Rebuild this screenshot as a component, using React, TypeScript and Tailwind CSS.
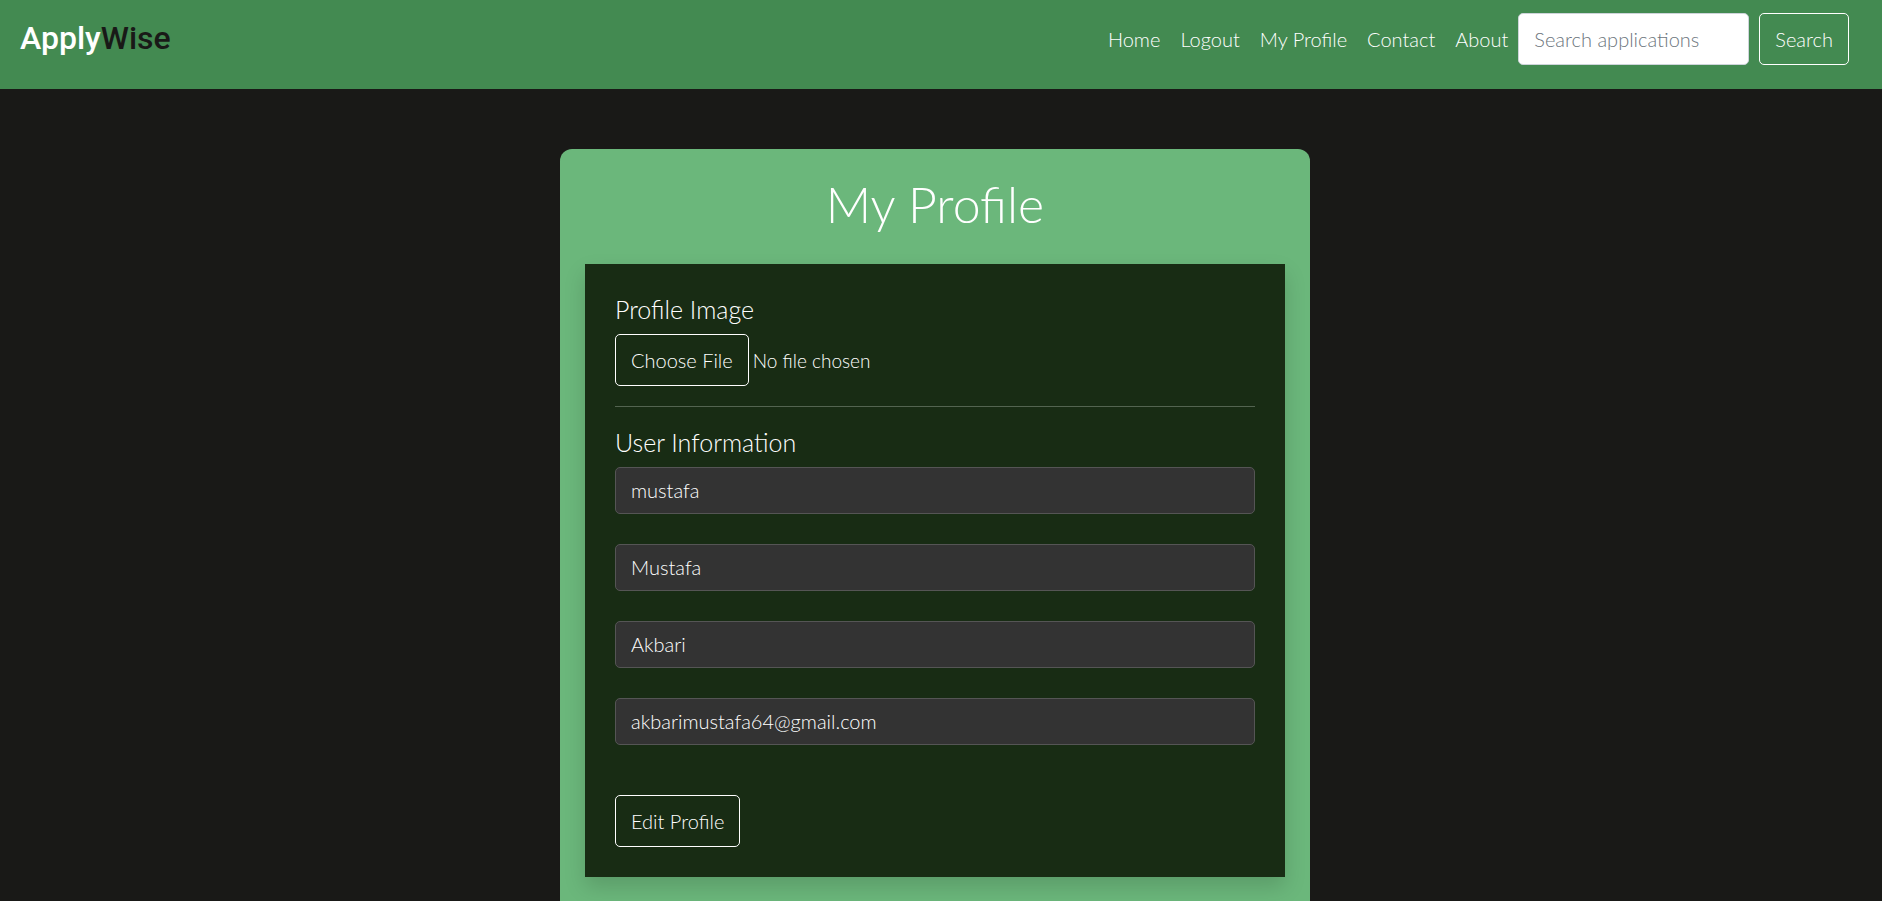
import React from "react";

const navLinks = ["Home", "Logout", "My Profile", "Contact", "About"];

const userFields = [
  { id: "username", label: "Username", type: "text", value: "mustafa" },
  { id: "first-name", label: "First name", type: "text", value: "Mustafa" },
  { id: "last-name", label: "Last name", type: "text", value: "Akbari" },
  { id: "email", label: "Email", type: "email", value: "akbarimustafa64@gmail.com" },
];

function Header() {
  return (
    <header className="flex items-start justify-between bg-[#438a51] pt-[13px] pr-[33px] pb-6 pl-5">
      <a
        href="#"
        className="font-[Roboto,sans-serif] text-[32px] leading-[50px] font-medium text-white"
      >
        Apply<span className="text-[#191917]">Wise</span>
      </a>
      <div className="flex items-center">
        <nav className="flex">
          {navLinks.map((link) => (
            <a key={link} href="#" className="px-[10px] leading-[30px]">
              {link}
            </a>
          ))}
        </nav>
        <form className="flex gap-[10px]" onSubmit={(e) => e.preventDefault()}>
          <input
            type="search"
            aria-label="Search applications"
            placeholder="Search applications"
            className="h-[52px] w-[231px] rounded-[5px] border border-[#ced4da] bg-white px-[15px] text-[#212529] placeholder:text-[#6c757d]"
          />
          <button
            type="submit"
            className="h-[52px] rounded-[5px] border border-white px-[15px]"
          >
            Search
          </button>
        </form>
      </div>
    </header>
  );
}

function ProfileForm() {
  return (
    <form
      className="bg-[#182c14] p-[30px] shadow-[0_10px_20px_rgba(0,0,0,0.15)]"
      onSubmit={(e) => e.preventDefault()}
    >
      <label htmlFor="profile-image" className="mb-[10px] block text-[25px] leading-[30px]">
        Profile Image
      </label>
      <input
        id="profile-image"
        type="file"
        className="block h-[52px] w-full text-[19px] file:mr-1 file:h-[52px] file:rounded-[5px] file:border file:border-solid file:border-white file:px-[15px] file:text-[20px]"
      />
      <hr className="my-5 border-[#536450]" />
      <h2 className="mb-[10px] text-[25px] leading-[30px]">User Information</h2>
      <div className="flex flex-col gap-[30px]">
        {userFields.map((field) => (
          <input
            key={field.id}
            id={field.id}
            type={field.type}
            aria-label={field.label}
            defaultValue={field.value}
            className="h-[47px] w-full rounded-[5px] border border-[#555555] bg-[#333333] px-[15px] pb-0.5"
          />
        ))}
      </div>
      <button
        type="submit"
        className="mt-[50px] block h-[52px] rounded-[5px] border border-white px-[15px]"
      >
        Edit Profile
      </button>
    </form>
  );
}

export default function App() {
  return (
    <div className="min-h-screen bg-[#191917] font-[Lato,sans-serif] text-[20px] leading-[30px] font-light text-white">
      <Header />
      <main className="py-[60px] pr-3">
        <section className="mx-auto max-w-[750px] rounded-[12px] bg-[#6bb77b] px-[25px] pt-[25px] pb-[50px]">
          <h1 className="mb-[30px] text-center text-[50px] leading-[60px]">My Profile</h1>
          <ProfileForm />
        </section>
      </main>
    </div>
  );
}
